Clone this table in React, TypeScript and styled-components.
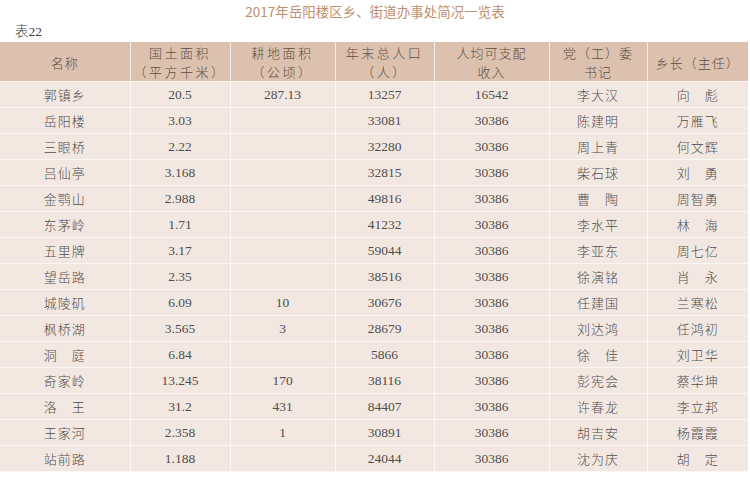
import React from "react";
import styled, { createGlobalStyle } from "styled-components";

const GlobalStyle = createGlobalStyle`
  html, body { margin: 0; padding: 0; background: #ffffff; }
  body { font-family: "Liberation Serif", "Noto Sans CJK SC", serif; }
`;

const Page = styled.div`
  width: 750px;
  height: 477px;
  overflow: hidden;
  display: flex;
  flex-direction: column;
`;

const Title = styled.h1`
  margin: 0;
  padding-top: 2px;
  height: 21px;
  text-align: center;
  font-family: "Noto Sans CJK SC", "Noto Sans", sans-serif;
  font-weight: 400;
  font-size: 13.5px;
  line-height: 18px;
  color: #c0906e;
`;

const Caption = styled.div`
  height: 19px;
  padding-left: 15px;
  font-size: 13.5px;
  font-weight: 300;
  line-height: 18px;
  color: #3e3e3e;
`;

const Table = styled.table`
  width: 748px;
  border-collapse: collapse;
  table-layout: fixed;
  background: #f3e8e1;
`;

const HeadCell = styled.th<{ $wide?: boolean }>`
  height: 37px;
  padding: 1px 0 0;
  background: #dcc1ae;
  border-right: 1px solid #f6eee9;
  border-bottom: 1px solid #fbf6f2;
  font-family: "Noto Sans CJK SC", sans-serif;
  font-weight: 300;
  font-size: 13px;
  line-height: 19px;
  letter-spacing: ${(p) => (p.$wide ? "2.5px" : "1px")};
  color: #5d4e45;
  text-align: center;
  vertical-align: middle;
  &:last-child { border-right: none; }
`;

const Cell = styled.td<{ $cjk?: boolean }>`
  height: 25px;
  padding: 0;
  border-right: 1px solid #fbf7f4;
  border-bottom: 1px solid #fbf7f4;
  font-family: ${(p) =>
    p.$cjk ? `"Noto Sans CJK SC", sans-serif` : `"Liberation Serif", serif`};
  font-weight: ${(p) => (p.$cjk ? 300 : 400)};
  font-size: ${(p) => (p.$cjk ? "13px" : "13.5px")};
  letter-spacing: ${(p) => (p.$cjk ? "1px" : "0")};
  color: #4e4e4e;
  text-align: center;
  vertical-align: middle;
  &:last-child { border-right: none; }
`;

const widths = [130, 100, 105, 99, 115, 98, 101];

const headers: [string, string?][] = [
  ["名称"],
  ["国土面积", "（平方千米）"],
  ["耕地面积", "（公顷）"],
  ["年末总人口", "（人）"],
  ["人均可支配", "收入"],
  ["党（工）委", "书记"],
  ["乡长（主任）"],
];

const rows: string[][] = [
  ["郭镇乡", "20.5", "287.13", "13257", "16542", "李大汉", "向　彪"],
  ["岳阳楼", "3.03", "", "33081", "30386", "陈建明", "万雁飞"],
  ["三眼桥", "2.22", "", "32280", "30386", "周上青", "何文辉"],
  ["吕仙亭", "3.168", "", "32815", "30386", "柴石球", "刘　勇"],
  ["金鹗山", "2.988", "", "49816", "30386", "曹　陶", "周智勇"],
  ["东茅岭", "1.71", "", "41232", "30386", "李水平", "林　海"],
  ["五里牌", "3.17", "", "59044", "30386", "李亚东", "周七亿"],
  ["望岳路", "2.35", "", "38516", "30386", "徐演铭", "肖　永"],
  ["城陵矶", "6.09", "10", "30676", "30386", "任建国", "兰寒松"],
  ["枫桥湖", "3.565", "3", "28679", "30386", "刘达鸿", "任鸿初"],
  ["洞　庭", "6.84", "", "5866", "30386", "徐　佳", "刘卫华"],
  ["奇家岭", "13.245", "170", "38116", "30386", "彭宪会", "蔡华坤"],
  ["洛　王", "31.2", "431", "84407", "30386", "许春龙", "李立邦"],
  ["王家河", "2.358", "1", "30891", "30386", "胡吉安", "杨霞霞"],
  ["站前路", "1.188", "", "24044", "30386", "沈为庆", "胡　定"],
];

const cjkCols = new Set([0, 5, 6]);

export default function App() {
  return (
    <Page>
      <GlobalStyle />
      <Title>2017年岳阳楼区乡、街道办事处简况一览表</Title>
      <Caption>表22</Caption>
      <Table>
        <colgroup>
          {widths.map((w, i) => (
            <col key={i} style={{ width: w }} />
          ))}
        </colgroup>
        <thead>
          <tr>
            {headers.map(([a, b], i) => (
              <HeadCell key={i} $wide={!!b && i !== 4 && i !== 5}>
                {a}
                {b && <br />}
                {b}
              </HeadCell>
            ))}
          </tr>
        </thead>
        <tbody>
          {rows.map((r, ri) => (
            <tr key={ri}>
              {r.map((c, ci) => (
                <Cell key={ci} $cjk={cjkCols.has(ci)}>
                  {c}
                </Cell>
              ))}
            </tr>
          ))}
        </tbody>
      </Table>
    </Page>
  );
}
